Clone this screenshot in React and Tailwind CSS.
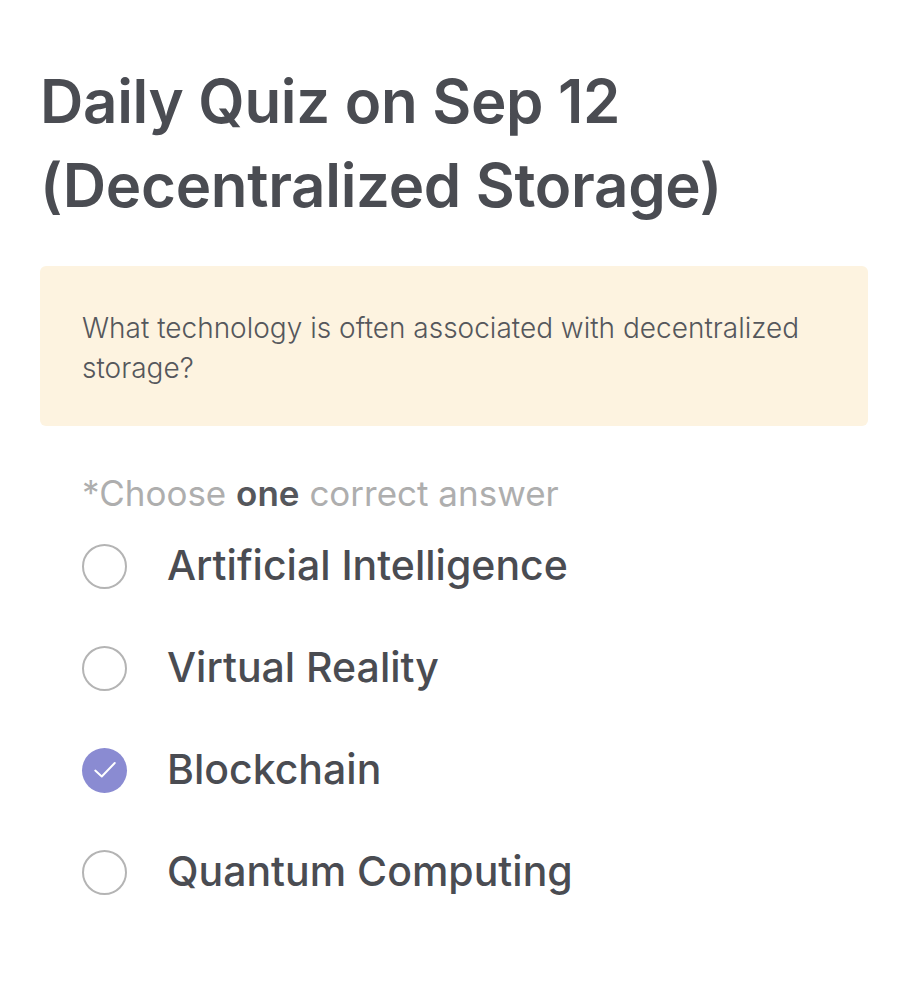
import React from "react";

const options = [
  { label: "Artificial Intelligence", checked: false },
  { label: "Virtual Reality", checked: false },
  { label: "Blockchain", checked: true },
  { label: "Quantum Computing", checked: false },
];

export default function App() {
  return (
    <div
      className="min-h-[983px] w-[908px] bg-white"
      style={{ fontFamily: "Inter, 'Noto Sans', sans-serif" }}
    >
      <div className="pl-[40px] pr-[40px] pt-[59px]">
        <h1 className="text-[60px] font-semibold leading-[84px] tracking-[-0.3px] text-[#4a4c52]">
          Daily Quiz on Sep 12
          <br />
          (Decentralized Storage)
        </h1>
        <div className="mt-[39px] rounded-[6px] bg-[#fdf3e0] px-[42px] pt-[42px] pb-[38px]">
          <p className="text-[28px] font-light leading-[40px] tracking-[0px] text-[#55575c]">
            What technology is often associated with decentralized storage?
          </p>
        </div>
        <div className="pl-[42px] pt-[45px]">
          <p className="text-[35px] leading-[44px] text-[#aeaeae]">
            *Choose <span className="font-semibold text-[#55575c]">one</span> correct answer
          </p>
          <div className="flex flex-col">
            {options.map((o) => (
              <div key={o.label} className="flex h-[102px] items-center">
                {o.checked ? (
                  <div className="flex h-[45px] w-[45px] shrink-0 items-center justify-center rounded-full bg-[#8a8bd2]">
                    <svg className="h-[26px] w-[26px]" viewBox="0 0 24 24" fill="none" stroke="white" strokeWidth="1.8" strokeLinecap="round" strokeLinejoin="round">
                      <path d="M3 12.5l6 5.5L21 5.5" />
                    </svg>
                  </div>
                ) : (
                  <div className="h-[45px] w-[45px] shrink-0 rounded-full border-2 border-[#b4b4b4]" />
                )}
                <span className="ml-[40px] text-[41px] font-medium text-[#4a4c52]">
                  {o.label}
                </span>
              </div>
            ))}
          </div>
        </div>
      </div>
    </div>
  );
}
